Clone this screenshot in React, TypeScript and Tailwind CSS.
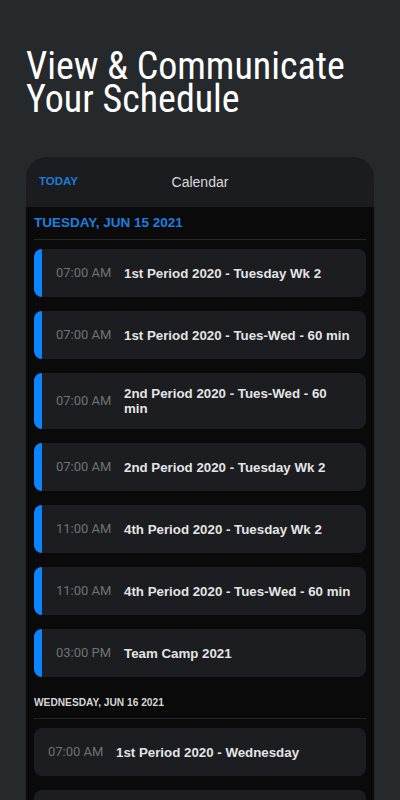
import React from "react";

type Item = { time: string; title: string; accent?: boolean };

const tuesday: Item[] = [
  { time: "07:00 AM", title: "1st Period 2020 - Tuesday Wk 2", accent: true },
  { time: "07:00 AM", title: "1st Period 2020 - Tues-Wed - 60 min", accent: true },
  { time: "07:00 AM", title: "2nd Period 2020 - Tues-Wed - 60 min", accent: true },
  { time: "07:00 AM", title: "2nd Period 2020 - Tuesday Wk 2", accent: true },
  { time: "11:00 AM", title: "4th Period 2020 - Tuesday Wk 2", accent: true },
  { time: "11:00 AM", title: "4th Period 2020 - Tues-Wed - 60 min", accent: true },
  { time: "03:00 PM", title: "Team Camp 2021", accent: true },
];

const wednesday: Item[] = [
  { time: "07:00 AM", title: "1st Period 2020 - Wednesday" },
  { time: "07:00 AM", title: "2nd Period 2020 - Wednesday" },
];

function EventRow({ time, title, accent }: Item) {
  return (
    <div className="flex rounded-lg overflow-hidden bg-[#1b1d20]">
      {accent && <div className="w-2 shrink-0 bg-[#0a84ff]" />}
      <div className="flex-1 min-w-0 flex items-center min-h-[48px] py-[13px] pl-[14px] pr-[13px] gap-[14px]">
        <span className="w-[54px] shrink-0 whitespace-nowrap font-['Roboto',sans-serif] text-[13px] text-[#6f7276]">
          {time}
        </span>
        <span className="flex-1 min-w-0 font-['Liberation_Sans',Arial,sans-serif] font-bold text-[13.3px] leading-[15px] text-[#e4e4e5]">
          {title}
        </span>
      </div>
    </div>
  );
}

export default function App() {
  return (
    <div className="w-[400px] h-[800px] overflow-hidden bg-[#26292c] pt-[50px]">
      <h1 className="px-[26px] font-['Liberation_Sans_Narrow','Roboto_Condensed','DejaVu_Sans_Condensed',sans-serif] text-[38px] leading-[33px] text-white">
        View &amp; Communicate
        <br />
        Your Schedule
      </h1>

      <div className="mx-[26px] mt-[41px] rounded-[22px] overflow-hidden bg-[#0a0a0b] font-['Liberation_Sans',Arial,sans-serif]">
        {/* header */}
        <div className="h-[50px] bg-[#1a1c1f] grid grid-cols-[1fr_auto_1fr] items-center px-[13px]">
          <span className="text-[11.5px] font-bold text-[#1f7bd8]">TODAY</span>
          <span className="text-[14px] text-[#d9d9da]">Calendar</span>
          <span />
        </div>

        <div className="px-2 pt-2 pb-6">
          <div className="pb-2 border-b border-[#252527] text-[13.5px] leading-4 font-bold text-[#1c7fe0]">
            TUESDAY, JUN 15 2021
          </div>
          <div className="mt-[9px] flex flex-col gap-[14px]">
            {tuesday.map((e, i) => (
              <EventRow key={i} {...e} />
            ))}
          </div>

          <div className="mt-[19px] pb-2 border-b border-[#252527] text-[10.2px] leading-[14px] font-bold text-[#d6d6d7]">
            WEDNESDAY, JUN 16 2021
          </div>
          <div className="mt-[9px] flex flex-col gap-[14px]">
            {wednesday.map((e, i) => (
              <EventRow key={i} {...e} />
            ))}
          </div>
        </div>
      </div>
    </div>
  );
}
